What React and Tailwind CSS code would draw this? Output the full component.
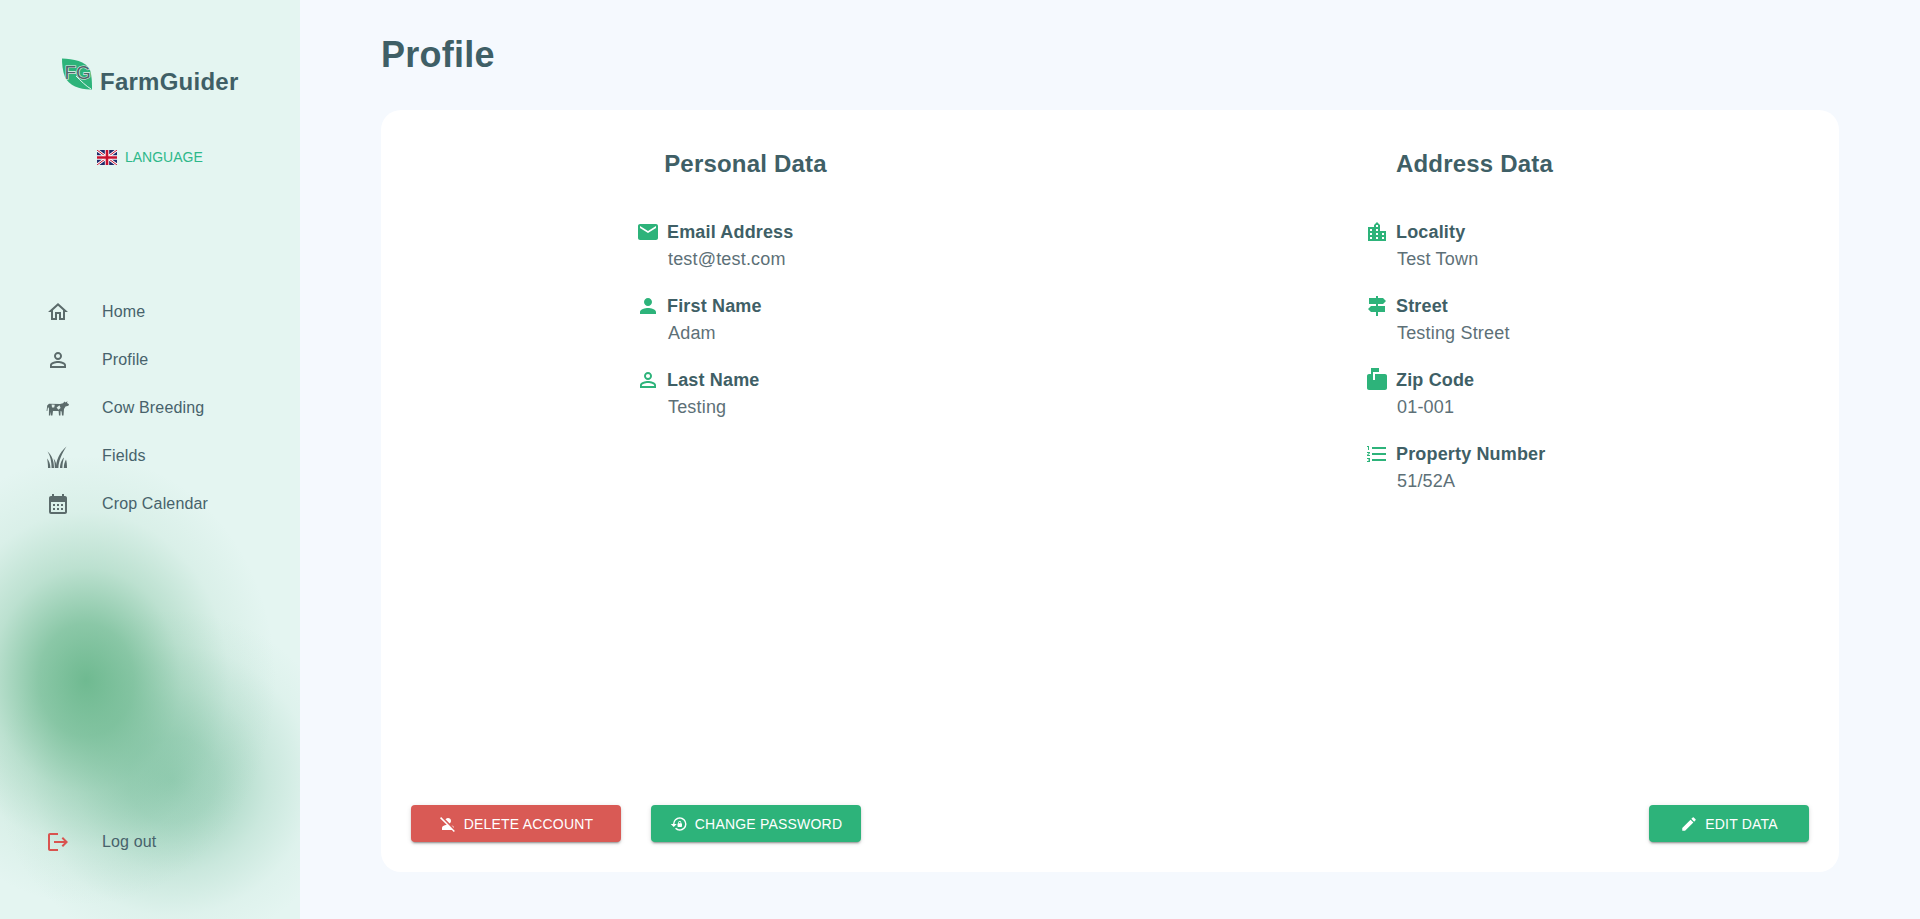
import React from 'react';
import {
    MdOutlineHome, MdPersonOutline, MdCalendarMonth, MdEmail, MdPerson,
    MdLocationCity, MdSignpost, MdMarkunreadMailbox, MdFormatListNumbered,
    MdEdit, MdPersonOff, MdLockReset, MdLogout
} from 'react-icons/md';

const CowIcon = ({ className }) => (
    <svg viewBox="0 0 24 24" className={className} fill="currentColor">
        <path d="M0.6 15 L1.2 9.5 L3 7.8 L14 8 L17 7.2 L18.5 5.6 L19.5 6.6 L21.5 5.2 L21 7 L23 8.2 L22.4 9.8 L19.5 10.4 L18 13 L17.5 19.5 L16 19.5 L15.6 15.5 L14.6 15 L14.4 19.5 L13 19.5 L12.6 15 L7 15 L6.4 19.5 L5 19.5 L5 15.8 L4.2 19.5 L2.9 19.5 L3 12.5 L2 11 L1.3 15 Z" />
        <path d="M5.6 8.6 L8.8 8.8 L8.2 11.6 L6 11.4 Z M10.6 11.5 L13.5 9.2 L14.6 12 L12.4 13.8 Z" fill="#dfeeea" />
    </svg>
);

const GrassIcon = ({ className }) => (
    <svg viewBox="0 0 24 24" className={className} fill="currentColor">
        <path d="M2 24 C2 20 1.6 17 1 14.5 C3 16.5 4.4 20 4.4 24 Z" />
        <path d="M5.6 24 C5.6 18 4.4 12 1.6 7.6 C5.6 11 8 17 8 24 Z" />
        <path d="M10 24 C10 17 13 9 20.5 2.5 C15.6 10 12.6 17 12.4 24 Z" />
        <path d="M8.8 24 C8.8 20 8.4 17 7.6 14.6 C9.4 16.6 10.6 20 10.6 24 Z" />
        <path d="M14 24 C14 20 15.6 15.5 18 13.5 C17 17 16.4 20.5 16.4 24 Z" />
        <path d="M17.8 24 C17.8 21 18.6 18 20 15.5 C20.8 18 21 21 21 24 Z" />
    </svg>
);

const FlagIcon = () => (
    <svg viewBox="0 0 60 45" className="w-5 h-[15px]">
        <rect width="60" height="45" fill="#1f2a6b" />
        <path d="M0 0 L60 45 M60 0 L0 45" stroke="#fff" strokeWidth="8" />
        <path d="M0 0 L60 45 M60 0 L0 45" stroke="#c8102e" strokeWidth="3" />
        <path d="M30 0 V45 M0 22.5 H60" stroke="#fff" strokeWidth="13" />
        <path d="M30 0 V45 M0 22.5 H60" stroke="#c8102e" strokeWidth="8" />
    </svg>
);

const LeafLogo = () => (
    <svg viewBox="0 0 32 32" className="w-8 h-8 shrink-0">
        <path d="M1 0.5 C12 1 25 3 29 12 C31 18 31 26 31 31.5 C20 32 8 28 4 19 C1.5 13 1 6 1 0.5 Z" fill="#2db37a" />
        <path d="M15 18 C20 23 25 28 30 31" stroke="#e4f5f1" strokeWidth="1" fill="none" />
        <text x="3.5" y="21" fontSize="19" fill="#4f6468" stroke="#e4f5f1" strokeWidth="1.2" paintOrder="stroke" fontFamily="'Liberation Sans', sans-serif">FG</text>
    </svg>
);

const navItems = [
    { label: 'Home', icon: MdOutlineHome },
    { label: 'Profile', icon: MdPersonOutline },
    { label: 'Cow Breeding', icon: CowIcon },
    { label: 'Fields', icon: GrassIcon },
    { label: 'Crop Calendar', icon: MdCalendarMonth },
];

const personalData = [
    { label: 'Email Address', value: 'test@test.com', icon: MdEmail },
    { label: 'First Name', value: 'Adam', icon: MdPerson },
    { label: 'Last Name', value: 'Testing', icon: MdPersonOutline },
];

const addressData = [
    { label: 'Locality', value: 'Test Town', icon: MdLocationCity },
    { label: 'Street', value: 'Testing Street', icon: MdSignpost },
    { label: 'Zip Code', value: '01-001', icon: MdMarkunreadMailbox },
    { label: 'Property Number', value: '51/52A', icon: MdFormatListNumbered },
];

const Sidebar = () => (
    <aside className="w-[300px] h-[919px] shrink-0 flex flex-col bg-[#e4f5f1] bg-[radial-gradient(ellipse_190px_225px_at_86px_680px,rgba(96,178,132,0.88)_0%,rgba(96,178,132,0.68)_25%,rgba(96,178,132,0.3)_50%,rgba(96,178,132,0.08)_75%,rgba(96,178,132,0)_100%),radial-gradient(ellipse_175px_170px_at_172px_780px,rgba(110,185,150,0.62)_0%,rgba(110,185,150,0.5)_25%,rgba(110,185,150,0.22)_55%,rgba(110,185,150,0.05)_80%,rgba(110,185,150,0)_100%)]">
        <div className="pt-[58px] pl-[61px] flex items-start">
            <LeafLogo />
            <span className="mt-[10px] ml-[7px] text-2xl font-bold leading-7 tracking-[0.25px] text-[#3f5f66]">FarmGuider</span>
        </div>

        <div className="mt-[51px] pl-[97px] h-5 flex items-center gap-2">
            <FlagIcon />
            <span className="text-sm text-[#2db88a]">LANGUAGE</span>
        </div>

        <nav className="mt-[121px] flex flex-col">
            {navItems.map((item) => (
                <div key={item.label} className="h-12 pl-[46px] flex items-center">
                    <item.icon className="w-6 h-6 text-[#5b6b6b]" />
                    <span className="ml-8 text-base tracking-[0.15px] text-[#47626b]">{item.label}</span>
                </div>
            ))}
        </nav>

        <div className="mt-auto mb-[53px] h-12 pl-[46px] flex items-center">
            <MdLogout className="w-6 h-6 text-[#d9534f]" />
            <span className="ml-8 text-base tracking-[0.15px] text-[#47626b]">Log out</span>
        </div>
    </aside>
);

const DataColumn = ({ title, rows }) => (
    <div className="flex flex-col">
        <h2 className="text-center text-2xl font-bold leading-8 tracking-[0.2px] text-[#3f5f66]">{title}</h2>
        <div className="mt-[40px] pl-[255px] flex flex-col gap-[22px]">
            {rows.map((row) => (
                <div key={row.label}>
                    <div className="flex items-center h-6">
                        <row.icon className="w-6 h-6 text-[#2db37a]" />
                        <span className="ml-[7px] text-lg font-bold tracking-[0.16px] text-[#3f5f66]">{row.label}</span>
                    </div>
                    <div className="ml-8 h-7 leading-[30px] text-lg tracking-[0.18px] text-[#5d7077]">{row.value}</div>
                </div>
            ))}
        </div>
    </div>
);

const ActionButton = ({ icon: Icon, label, className }) => (
    <button className={`h-[37px] rounded flex items-center justify-center gap-[7px] text-sm tracking-[0.2px] text-white shadow-[0_3px_1px_-2px_rgba(0,0,0,0.2),0_2px_2px_0_rgba(0,0,0,0.14),0_1px_5px_0_rgba(0,0,0,0.12)] ${className}`}>
        <Icon className="w-[18px] h-[18px]" />
        {label}
    </button>
);

export default function App() {
    return (
        <div className="flex h-[919px] overflow-hidden bg-[#f5f9fe] font-['Liberation_Sans',sans-serif]">
            <Sidebar />
            <main className="flex-1 px-[81px] flex flex-col">
                <h1 className="h-[110px] pt-[33px] text-4xl font-bold leading-[44px] tracking-[0.25px] text-[#3f5f66]">Profile</h1>
                <section className="h-[762px] rounded-[20px] bg-white flex flex-col justify-between">
                    <div className="pt-[38px] grid grid-cols-2">
                        <DataColumn title="Personal Data" rows={personalData} />
                        <DataColumn title="Address Data" rows={addressData} />
                    </div>
                    <div className="px-[30px] pb-[30px] flex items-center">
                        <ActionButton icon={MdPersonOff} label="DELETE ACCOUNT" className="w-[210px] bg-[#d95a55]" />
                        <ActionButton icon={MdLockReset} label="CHANGE PASSWORD" className="w-[210px] ml-[30px] bg-[#2db37a]" />
                        <ActionButton icon={MdEdit} label="EDIT DATA" className="w-40 ml-auto bg-[#2db37a]" />
                    </div>
                </section>
            </main>
        </div>
    );
}
